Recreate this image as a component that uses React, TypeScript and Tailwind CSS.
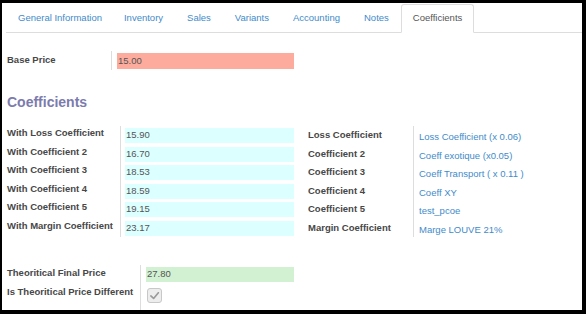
import React from "react";

const tabs = ["General Information", "Inventory", "Sales", "Variants", "Accounting", "Notes", "Coefficients"];

const coefRows = [
  { l: "With Loss Coefficient", v: "15.90", r: "Loss Coefficient", rv: "Loss Coefficient (x 0.06)" },
  { l: "With Coefficient 2", v: "16.70", r: "Coefficient 2", rv: "Coeff exotique (x0.05)" },
  { l: "With Coefficient 3", v: "18.53", r: "Coefficient 3", rv: "Coeff Transport ( x 0.11 )" },
  { l: "With Coefficient 4", v: "18.59", r: "Coefficient 4", rv: "Coeff XY" },
  { l: "With Coefficient 5", v: "19.15", r: "Coefficient 5", rv: "test_pcoe" },
  { l: "With Margin Coefficient", v: "23.17", r: "Margin Coefficient", rv: "Marge LOUVE 21%" },
];

export default function App() {
  return (
    <div
      className="w-[586px] h-[314px] bg-black pt-[3px] pl-[2px] pr-[4px] pb-[4px]"
      style={{ fontFamily: '"Liberation Sans", Arial, Helvetica, sans-serif' }}
    >
      <div className="w-full h-full bg-white text-[9.5px] text-[#474747] flex flex-col">
        {/* Tabs */}
        <div className="ml-[4px] mt-[1px] h-[29px] flex border-b border-[#dddddd]">
          {tabs.map((t, i) => {
            const active = t === "Coefficients";
            return (
              <div
                key={t}
                className={
                  active
                    ? "h-[29px] -mb-px px-[11px] flex items-center border border-[#dddddd] border-b-white bg-white rounded-t-[3px] text-[#555555]"
                    : i === 0
                    ? "h-[28px] pl-[12px] pr-[10px] flex items-center text-[#428bca]"
                    : "h-[28px] px-[12px] flex items-center text-[#428bca]"
                }
              >
                {t}
              </div>
            );
          })}
        </div>

        {/* Base price */}
        <div className="mt-[18px] pl-[5px] flex">
          <div className="w-[104px] pt-[3px] font-bold leading-[12px]">Base Price</div>
          <div className="border-l border-[#dddddd] h-[19px] pl-[5px] pt-[2px]">
            <div className="w-[177px] h-[16px] bg-[#fdab9c] pl-[1px] flex items-center text-[#555555]">15.00</div>
          </div>
        </div>

        {/* Heading */}
        <div className="mt-[24px] pl-[5px] text-[14px] leading-[16px] font-bold text-[#7c7bad]">Coefficients</div>

        {/* Coefficients group */}
        <div className="mt-[16px] pl-[5px] flex">
          <div className="w-[113px] flex flex-col">
            {coefRows.map((r) => (
              <div key={r.l} className="h-[18.5px] pt-[1px] font-bold leading-[12px]">
                {r.l}
              </div>
            ))}
          </div>
          <div className="border-l border-[#dddddd] pl-[4px] flex flex-col">
            {coefRows.map((r) => (
              <div key={r.v} className="h-[18.5px] pt-[2px]">
                <div className="w-[169px] h-[15px] bg-[#dcffff] pl-[1px] flex items-center text-[#555555]">{r.v}</div>
              </div>
            ))}
          </div>
          <div className="ml-[14px] w-[105px] flex flex-col">
            {coefRows.map((r) => (
              <div key={r.r} className="h-[18.5px] pt-[3px] font-bold leading-[12px]">
                {r.r}
              </div>
            ))}
          </div>
          <div className="border-l border-[#dddddd] pl-[5px] flex flex-col">
            {coefRows.map((r) => (
              <div key={r.rv} className="h-[18.5px] pt-[5px] leading-[12px] text-[#428bca]">
                {r.rv}
              </div>
            ))}
          </div>
        </div>

        {/* Bottom group */}
        <div className="mt-[28px] pl-[5px] flex flex-1">
          <div className="w-[133px] flex flex-col">
            <div className="h-[20px] pt-[2px] font-bold leading-[12px]">Theoritical Final Price</div>
            <div className="h-[20px] pt-[1px] font-bold leading-[12px]">Is Theoritical Price Different</div>
          </div>
          <div className="border-l border-[#dddddd] pl-[5px] flex flex-col">
            <div className="h-[20px] pt-[2px]">
              <div className="w-[148px] h-[15px] bg-[#d2f0d2] pl-[1px] flex items-center text-[#555555]">27.80</div>
            </div>
            <div className="pt-[3px] pl-[1px]">
              <div className="w-[15px] h-[15px] rounded-[3px] border border-[#c8c8c8] bg-[#ededed] flex items-center justify-center">
                <svg width="11" height="11" viewBox="0 0 12 12">
                  <path d="M2 6.5 L5 9.2 L10.2 3" fill="none" stroke="#9a9a9a" strokeWidth="1.8" strokeLinecap="round" strokeLinejoin="round" />
                </svg>
              </div>
            </div>
          </div>
        </div>
      </div>
    </div>
  );
}
